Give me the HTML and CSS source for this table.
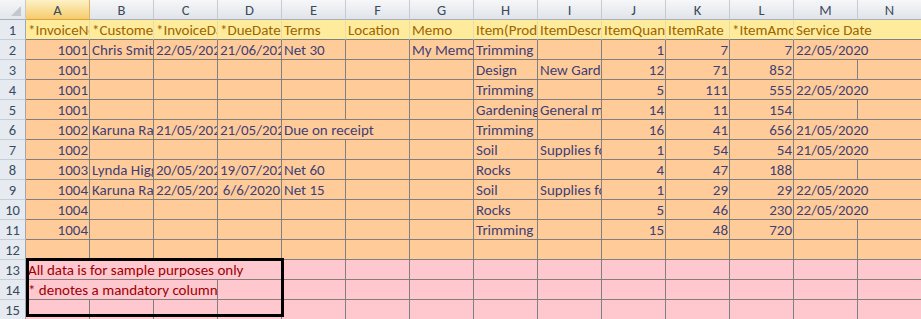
FILE: index.html
```html
<!DOCTYPE html>
<html lang="en">
<head>
<meta charset="utf-8">
<title>Sheet</title>
<link rel="stylesheet" href="styles.css">
</head>
<body>
<div class="sheet">
  <div class="row colheads">
    <div class="corner"><svg width="25" height="19" viewBox="0 0 25 19"><polygon points="11,16 21,16 21,6" fill="#c3c8cf"/></svg></div>
    <div class="ch sel">A</div><div class="ch">B</div><div class="ch">C</div><div class="ch">D</div><div class="ch">E</div><div class="ch">F</div><div class="ch">G</div><div class="ch">H</div><div class="ch">I</div><div class="ch">J</div><div class="ch">K</div><div class="ch">L</div><div class="ch">M</div><div class="ch">N</div>
  </div>
  <div class="row neutral">
    <div class="rh">1</div>
    <div class="c">*InvoiceNo</div><div class="c">*Customer</div><div class="c">*InvoiceDate</div><div class="c">*DueDate</div><div class="c">Terms</div><div class="c">Location</div><div class="c">Memo</div><div class="c">Item(Product/Service)</div><div class="c">ItemDescription</div><div class="c">ItemQuantity</div><div class="c">ItemRate</div><div class="c">*ItemAmount</div><div class="c s2">Service Date</div>
  </div>
  <div class="row input">
    <div class="rh">2</div>
    <div class="c n">1001</div><div class="c">Chris Smith</div><div class="c">22/05/2020</div><div class="c">21/06/2020</div><div class="c">Net 30</div><div class="c"></div><div class="c">My Memo</div><div class="c">Trimming</div><div class="c"></div><div class="c n">1</div><div class="c n">7</div><div class="c n">7</div><div class="c s2">22/05/2020</div>
  </div>
  <div class="row input">
    <div class="rh">3</div>
    <div class="c n">1001</div><div class="c"></div><div class="c"></div><div class="c"></div><div class="c"></div><div class="c"></div><div class="c"></div><div class="c">Design</div><div class="c">New Garden Design</div><div class="c n">12</div><div class="c n">71</div><div class="c n">852</div><div class="c"></div><div class="c"></div>
  </div>
  <div class="row input">
    <div class="rh">4</div>
    <div class="c n">1001</div><div class="c"></div><div class="c"></div><div class="c"></div><div class="c"></div><div class="c"></div><div class="c"></div><div class="c">Trimming</div><div class="c"></div><div class="c n">5</div><div class="c n">111</div><div class="c n">555</div><div class="c s2">22/05/2020</div>
  </div>
  <div class="row input">
    <div class="rh">5</div>
    <div class="c n">1001</div><div class="c"></div><div class="c"></div><div class="c"></div><div class="c"></div><div class="c"></div><div class="c"></div><div class="c">Gardening</div><div class="c">General maintenance</div><div class="c n">14</div><div class="c n">11</div><div class="c n">154</div><div class="c"></div><div class="c"></div>
  </div>
  <div class="row input">
    <div class="rh">6</div>
    <div class="c n">1002</div><div class="c">Karuna Rao</div><div class="c">21/05/2020</div><div class="c">21/05/2020</div><div class="c s2">Due on receipt</div><div class="c"></div><div class="c">Trimming</div><div class="c"></div><div class="c n">16</div><div class="c n">41</div><div class="c n">656</div><div class="c s2">21/05/2020</div>
  </div>
  <div class="row input">
    <div class="rh">7</div>
    <div class="c n">1002</div><div class="c"></div><div class="c"></div><div class="c"></div><div class="c"></div><div class="c"></div><div class="c"></div><div class="c">Soil</div><div class="c">Supplies for garden</div><div class="c n">1</div><div class="c n">54</div><div class="c n">54</div><div class="c s2">21/05/2020</div>
  </div>
  <div class="row input">
    <div class="rh">8</div>
    <div class="c n">1003</div><div class="c">Lynda Higgins</div><div class="c">20/05/2020</div><div class="c">19/07/2020</div><div class="c">Net 60</div><div class="c"></div><div class="c"></div><div class="c">Rocks</div><div class="c"></div><div class="c n">4</div><div class="c n">47</div><div class="c n">188</div><div class="c"></div><div class="c"></div>
  </div>
  <div class="row input">
    <div class="rh">9</div>
    <div class="c n">1004</div><div class="c">Karuna Rao</div><div class="c">22/05/2020</div><div class="c n">6/6/2020</div><div class="c">Net 15</div><div class="c"></div><div class="c"></div><div class="c">Soil</div><div class="c">Supplies for garden</div><div class="c n">1</div><div class="c n">29</div><div class="c n">29</div><div class="c s2">22/05/2020</div>
  </div>
  <div class="row input">
    <div class="rh">10</div>
    <div class="c n">1004</div><div class="c"></div><div class="c"></div><div class="c"></div><div class="c"></div><div class="c"></div><div class="c"></div><div class="c">Rocks</div><div class="c"></div><div class="c n">5</div><div class="c n">46</div><div class="c n">230</div><div class="c s2">22/05/2020</div>
  </div>
  <div class="row input">
    <div class="rh">11</div>
    <div class="c n">1004</div><div class="c"></div><div class="c"></div><div class="c"></div><div class="c"></div><div class="c"></div><div class="c"></div><div class="c">Trimming</div><div class="c"></div><div class="c n">15</div><div class="c n">48</div><div class="c n">720</div><div class="c"></div><div class="c"></div>
  </div>
  <div class="row input">
    <div class="rh">12</div>
    <div class="c"></div><div class="c"></div><div class="c"></div><div class="c"></div><div class="c"></div><div class="c"></div><div class="c"></div><div class="c"></div><div class="c"></div><div class="c"></div><div class="c"></div><div class="c"></div><div class="c"></div><div class="c"></div>
  </div>
  <div class="row bad">
    <div class="rh">13</div>
    <div class="c s4">All data is for sample purposes only</div><div class="c"></div><div class="c"></div><div class="c"></div><div class="c"></div><div class="c"></div><div class="c"></div><div class="c"></div><div class="c"></div><div class="c"></div><div class="c"></div>
  </div>
  <div class="row bad">
    <div class="rh">14</div>
    <div class="c s3">* denotes a mandatory column</div><div class="c"></div><div class="c"></div><div class="c"></div><div class="c"></div><div class="c"></div><div class="c"></div><div class="c"></div><div class="c"></div><div class="c"></div><div class="c"></div><div class="c"></div>
  </div>
  <div class="row bad">
    <div class="rh">15</div>
    <div class="c"></div><div class="c"></div><div class="c"></div><div class="c"></div><div class="c"></div><div class="c"></div><div class="c"></div><div class="c"></div><div class="c"></div><div class="c"></div><div class="c"></div><div class="c"></div><div class="c"></div><div class="c"></div>
  </div>
  <div class="note-box"></div>
</div>
</body>
</html>
```
FILE: styles.css
```css
html, body {
  margin: 0;
  padding: 0;
  background: #ffffff;
  overflow: hidden;
}

.sheet {
  position: relative;
  display: grid;
  grid-template-columns: 26px repeat(14, 64px);
  grid-auto-rows: 20px;
  font-family: Calibri, Carlito, Lato, "Liberation Sans", sans-serif;
  font-size: 15px;
  width: 922px;
}

.row {
  display: contents;
}

.corner,
.ch,
.rh,
.c {
  box-sizing: border-box;
  border-right: 1px solid #7f7f7f;
  border-bottom: 1px solid #7f7f7f;
  overflow: hidden;
  white-space: nowrap;
  line-height: 19px;
}

.corner {
  background: linear-gradient(#f4f6f8, #e3e6ea);
  border-right-color: #c4c9d0;
  border-bottom-color: #a9b0ba;
}

.corner svg {
  display: block;
}

.ch {
  background: linear-gradient(#f6f7f9, #e0e4e9);
  border-right-color: #c6cbd2;
  border-bottom-color: #a9b0ba;
  color: #3b4a5c;
  text-align: center;
  font-size: 14.5px;
  padding-top: 1px;
}

.ch.sel {
  background: linear-gradient(#fdf1c6, #f8d787 70%, #f5cb6c);
  border-right-color: #e0b761;
  border-bottom-color: #d9a43e;
}

.rh {
  background: #e6ebf1;
  border-right-color: #9ea7b3;
  border-bottom-color: #c7cdd5;
  color: #3b4a5c;
  text-align: center;
  font-size: 14.5px;
  padding-top: 1px;
}

.c {
  padding: 1px 1px 0 2px;
}

.c.n {
  text-align: right;
  padding-left: 1px;
}

.s2 { grid-column: span 2; }
.s3 { grid-column: span 3; }
.s4 { grid-column: span 4; }

.neutral .c {
  background: #ffeb9c;
  color: #9c6500;
  border-right-color: #e9dca6;
}

.input .c {
  background: #ffcc99;
  color: #3f3f76;
}

.bad .c {
  background: #ffc7ce;
  color: #9c0006;
}

.note-box {
  position: absolute;
  left: 26px;
  top: 258px;
  width: 258px;
  height: 59px;
  box-sizing: border-box;
  border: 3px solid #000000;
  pointer-events: none;
}
```
